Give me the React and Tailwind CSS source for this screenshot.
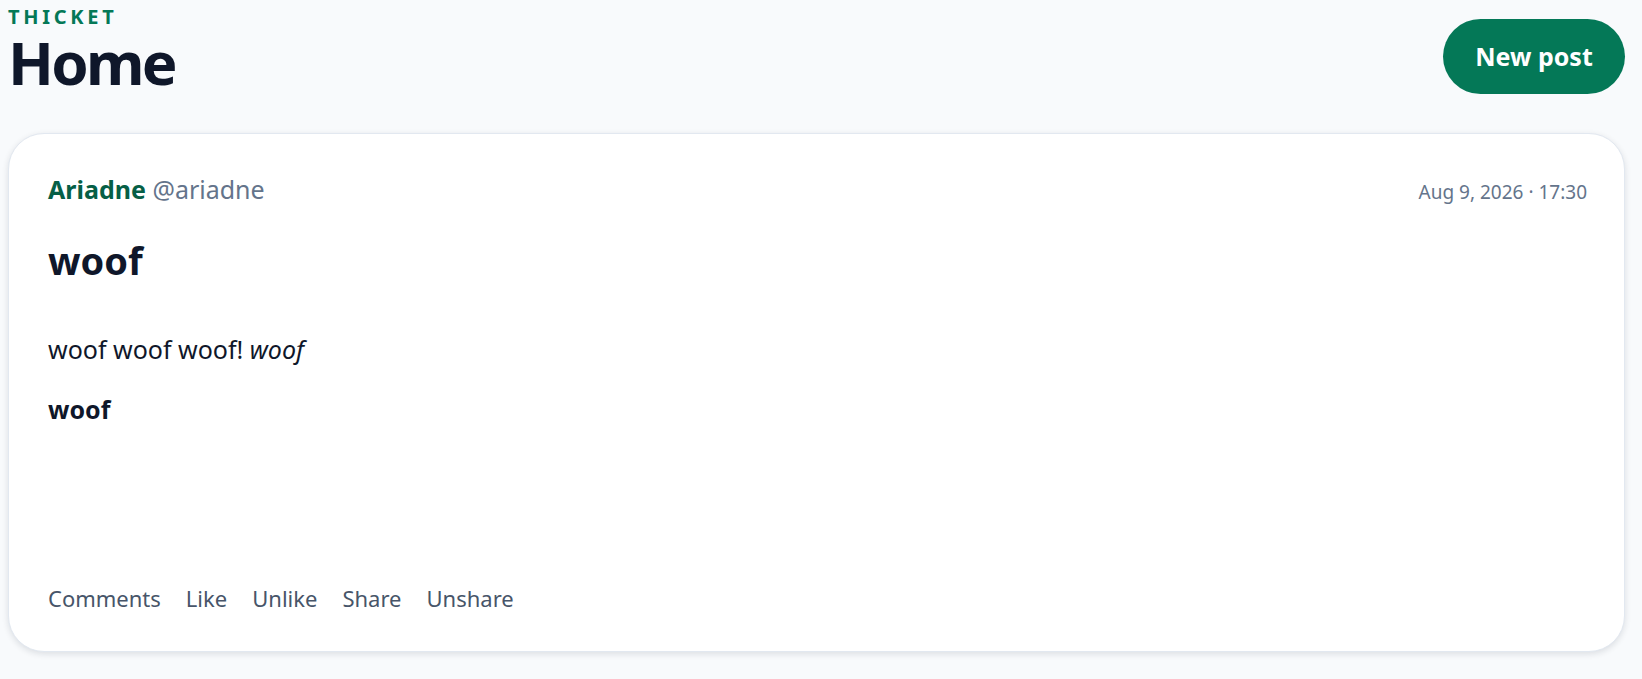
export default function App() {
  const actions = ['Comments', 'Like', 'Unlike', 'Share', 'Unshare'];

  return (
    <div className="min-h-screen bg-[#f8fafc] pl-2 pr-[17px] pt-[2px] font-['Noto_Sans',sans-serif] text-[#0f172a]">
      {/* Header */}
      <header className="flex items-end justify-between">
        <div className="pb-[2px]">
          <div className="text-[20px] leading-[30px] font-bold tracking-[0.185em] text-[#047857]">THICKET</div>
          <h1 className="text-[60px] leading-[60px] font-bold tracking-[-0.045em]">Home</h1>
        </div>
        <button className="h-[75px] w-[182px] rounded-full bg-[#047857] text-[25px] font-bold text-white">
          New post
        </button>
      </header>

      {/* Post card */}
      <article className="mt-[39px] rounded-[36px] border border-[#e2e8f0] bg-white pl-[39px] pr-[37px] pt-[39px] pb-[37px] shadow-[0_2px_6px_rgba(15,23,42,0.12)]">
        <div className="flex items-baseline justify-between">
          <div className="text-[25px] leading-[32px]">
            <span className="font-bold text-[#065f46]">Ariadne</span>{' '}
            <span className="text-[#64748b]">@ariadne</span>
          </div>
          <div className="text-[19px] text-[#64748b]">Aug 9, 2026 · 17:30</div>
        </div>

        <h2 className="mt-[29px] text-[38px] leading-[48px] font-bold">woof</h2>

        <div className="mt-[47px] text-[25px] leading-[36px]">
          <p>
            woof woof woof! <em>woof</em>
          </p>
          <p className="mt-[24px] font-bold">woof</p>
        </div>

        <div className="mt-[155px] flex gap-[25px] text-[22px] leading-[32px] text-[#475569]">
          {actions.map((a) => (
            <button key={a} className="hover:text-[#047857]">
              {a}
            </button>
          ))}
        </div>
      </article>
    </div>
  );
}
